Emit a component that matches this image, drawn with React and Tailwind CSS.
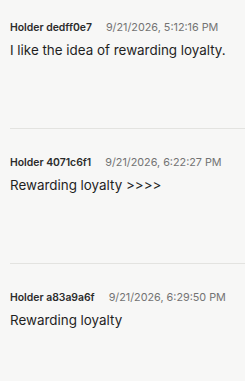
const comments = [
  {
    holder: "Holder dedff0e7",
    time: "9/21/2026, 5:12:16 PM",
    text: "I like the idea of rewarding loyalty.",
  },
  {
    holder: "Holder 4071c6f1",
    time: "9/21/2026, 6:22:27 PM",
    text: "Rewarding loyalty >>>>",
  },
  {
    holder: "Holder a83a9a6f",
    time: "9/21/2026, 6:29:50 PM",
    text: "Rewarding loyalty",
  },
];

export default function App() {
  return (
    <div className="min-h-screen bg-[#f7f7f6] pl-[10px] font-['Inter',sans-serif]">
      {comments.map((c, i) => (
        <div
          key={i}
          className={`border-b border-[#e3e3e0] pb-[68px] ${i === 0 ? "pt-[20px]" : "pt-[26px]"}`}
        >
          <div className="flex items-center gap-[14px] leading-[16px]">
            <span className="text-[10.4px] font-semibold text-[#2b2b2b]">{c.holder}</span>
            <span className="text-[10.8px] text-[#737373]">{c.time}</span>
          </div>
          <p className="mt-[4px] text-[13.4px] leading-[20px] text-[#1f1f1f]">{c.text}</p>
        </div>
      ))}
    </div>
  );
}
